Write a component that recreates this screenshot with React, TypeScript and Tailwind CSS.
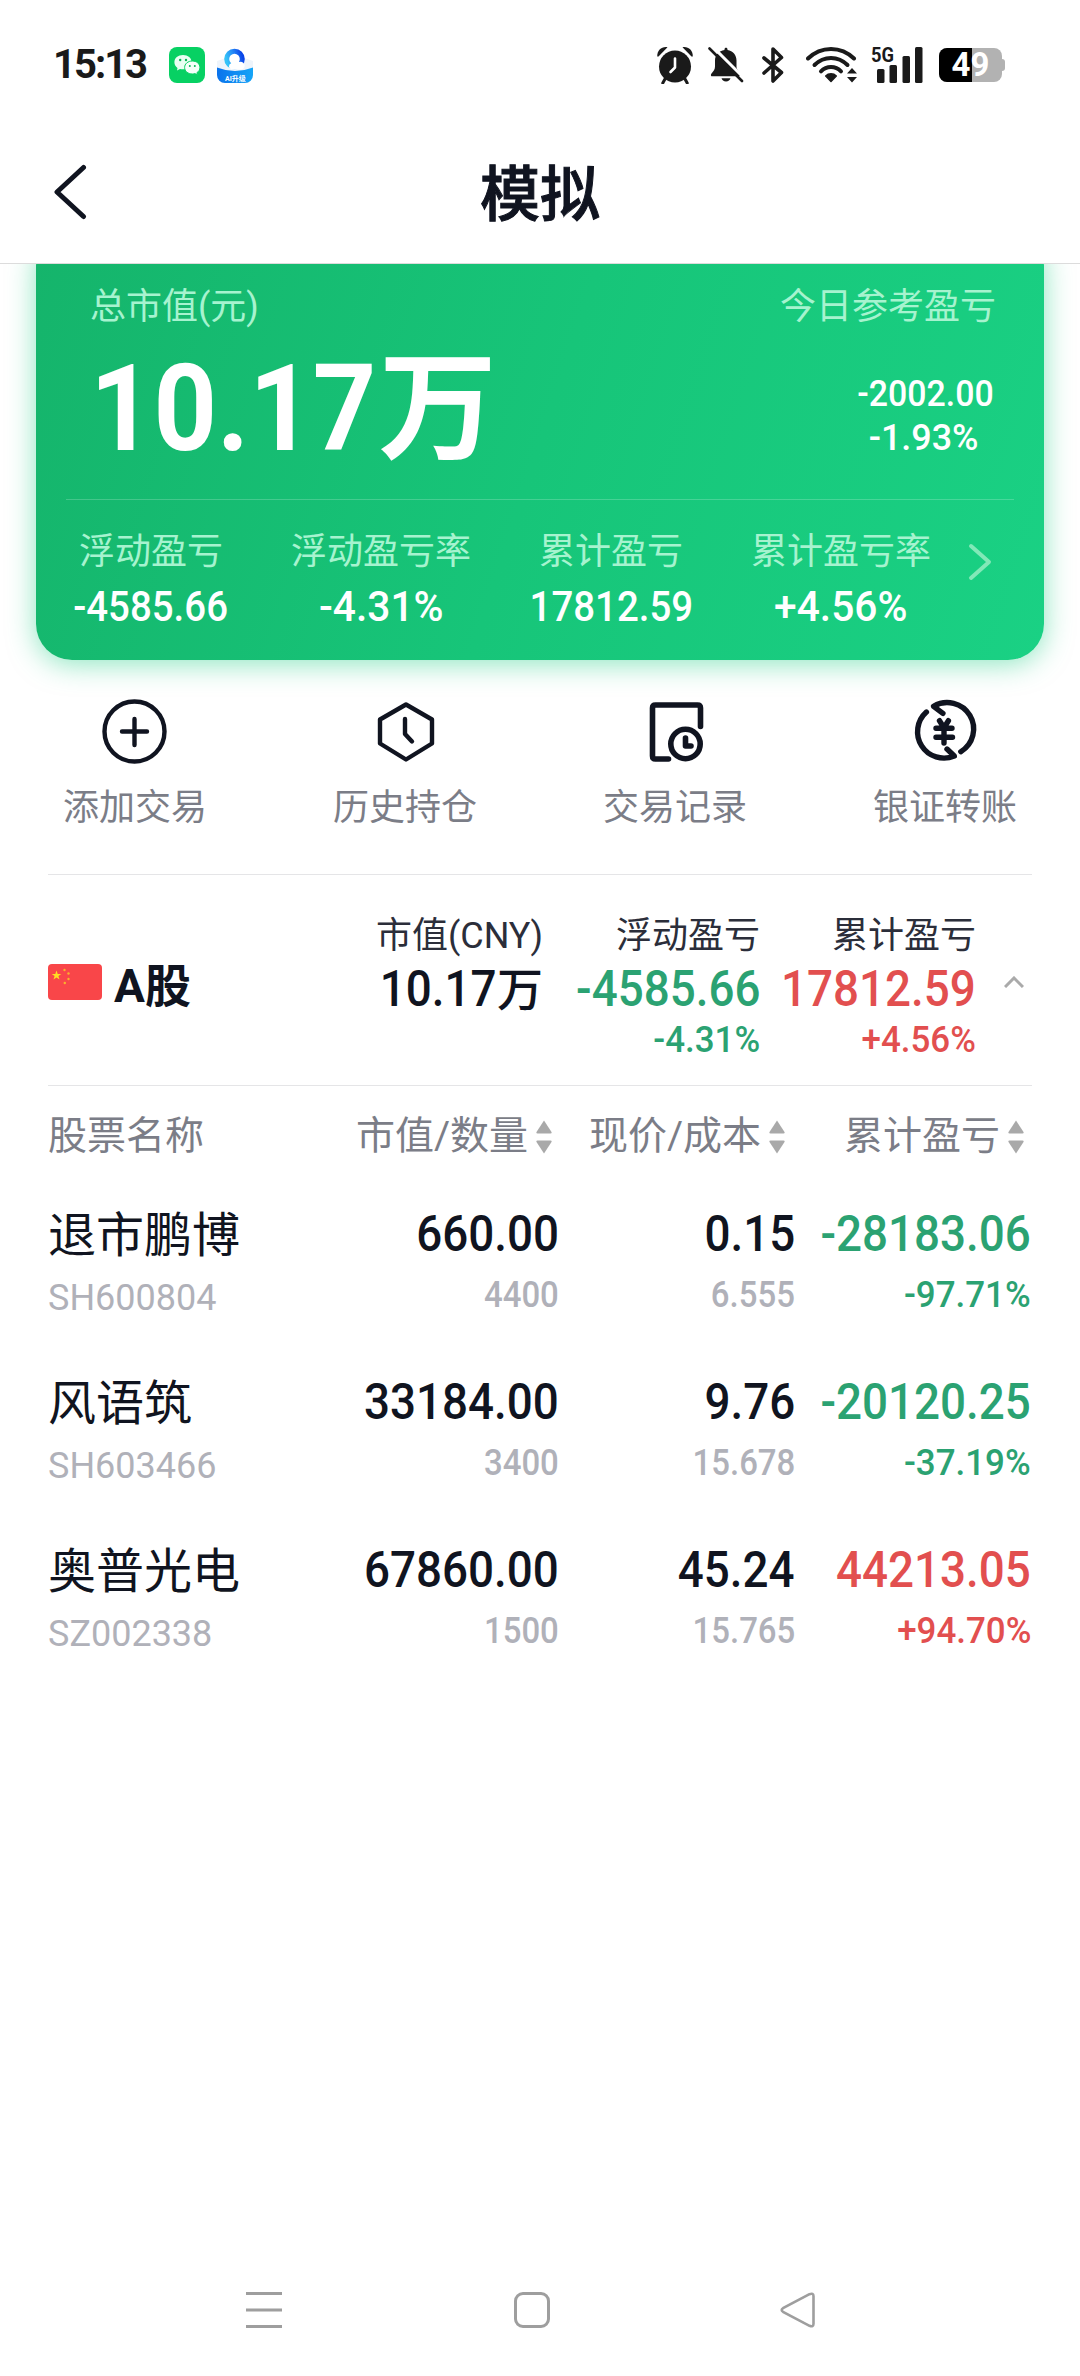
import type { ReactNode } from "react";
import clsx from "clsx";

interface Holding {
  name: string;
  code: string;
  value: string;
  amount: string;
  price: string;
  cost: string;
  profit: string;
  rate: string;
}

const summary = [
  { label: "浮动盈亏", value: "-4585.66" },
  { label: "浮动盈亏率", value: "-4.31%" },
  { label: "累计盈亏", value: "17812.59" },
  { label: "累计盈亏率", value: "+4.56%" },
];

const holdings: Holding[] = [
  {
    name: "退市鹏博",
    code: "SH600804",
    value: "660.00",
    amount: "4400",
    price: "0.15",
    cost: "6.555",
    profit: "-28183.06",
    rate: "-97.71%",
  },
  {
    name: "风语筑",
    code: "SH603466",
    value: "33184.00",
    amount: "3400",
    price: "9.76",
    cost: "15.678",
    profit: "-20120.25",
    rate: "-37.19%",
  },
  {
    name: "奥普光电",
    code: "SZ002338",
    value: "67860.00",
    amount: "1500",
    price: "45.24",
    cost: "15.765",
    profit: "44213.05",
    rate: "+94.70%",
  },
];

const profitColor = (value: string) =>
  value.startsWith("-") ? "text-[#2ba272]" : "text-[#e24f4f]";

// figures are set a bit narrower than the body font
const Num = ({ children, center }: { children: string; center?: boolean }) => (
  <span
    className={clsx(
      "inline-block",
      center ? "origin-center" : "origin-right",
      children.endsWith("%") ? "scale-x-[0.97]" : "scale-x-[0.915]"
    )}
  >
    {children}
  </span>
);

const WechatIcon = () => (
  <svg width="36" height="36" viewBox="0 0 36 36">
    <rect width="36" height="36" rx="8" fill="#07d163" />
    <path
      d="M14 8c-5 0-8.600 3.100-8.600 7.200 0 2.400 1.200 4.300 3.100 5.700l-.5 2.500 3-1.500c1 .3 2 .4 3 .4 5 0 8.600-3.100 8.600-7.100C22.600 11.100 19 8 14 8z"
      fill="#e9fff3"
    />
    <path
      d="M23.300 14c-4.300 0-7.700 2.800-7.700 6.500s3.400 6.500 7.700 6.500c.9 0 1.800-.1 2.600-.4l2.500 1.300-.5-2.200c1.900-1.200 3-3 3-5.200 0-3.700-3.300-6.500-7.600-6.500z"
      fill="#f4fff9"
      stroke="#07d163"
      strokeWidth="1"
    />
    <circle cx="11.200" cy="13" r="1.200" fill="#07b656" />
    <circle cx="17" cy="13" r="1.200" fill="#07b656" />
    <circle cx="20.800" cy="19" r="1" fill="#07b656" />
    <circle cx="25.800" cy="19" r="1" fill="#07b656" />
  </svg>
);

const BrowserIcon = () => (
  <svg width="36" height="36" viewBox="0 0 36 36">
    <defs>
      <linearGradient id="ring" x1="0" y1="0.600" x2="1" y2="0.300">
        <stop offset="0" stopColor="#35c3f8" />
        <stop offset="0.600" stopColor="#1f7bf5" />
        <stop offset="1" stopColor="#0a45e8" />
      </linearGradient>
      <linearGradient id="ribbon" x1="0" y1="0" x2="1" y2="0">
        <stop offset="0" stopColor="#0a72ec" />
        <stop offset="1" stopColor="#16a5f7" />
      </linearGradient>
    </defs>
    <path d="M0 14l9-3h18l9 3v14a8 8 0 0 1-8 8H8a8 8 0 0 1-8-8z" fill="#eef4fb" />
    <circle cx="17.500" cy="12" r="7.800" fill="#fff" stroke="url(#ring)" strokeWidth="5" />
    <path
      d="M14.500 22.500a3.300 3.300 0 0 1-.4-6.300 4.400 4.400 0 0 1 8.200-1.200 4 4 0 0 1 5.400 3.700c0 2.200-1.700 3.800-3.800 3.800z"
      fill="#fff"
    />
    <path d="M0 20.500q18 7 36 0V28a8 8 0 0 1-8 8H8a8 8 0 0 1-8-8z" fill="url(#ribbon)" />
    <text
      x="18.500"
      y="33.500"
      textAnchor="middle"
      fontSize="7"
      fontWeight="700"
      fill="#fff"
      className="font-['Roboto','Noto_Sans_CJK_SC',sans-serif]"
    >
      AI升级
    </text>
  </svg>
);

const AlarmIcon = () => (
  <svg width="38" height="38" viewBox="0 0 38 38" fill="#1a1a1a">
    <circle cx="19" cy="20.500" r="16" />
    <path d="M1.200 10.500C1 4 6 .2 11.500 1.200L2.500 10.500z" />
    <path d="M36.800 10.500C37 4 32 .2 26.500 1.200L35.500 10.500z" />
    <path d="M9 33l-2.200 4M29 33l2.200 4" stroke="#1a1a1a" strokeWidth="3" strokeLinecap="round" />
    <path
      d="M19 12.500v9l-4.500 4.500"
      fill="none"
      stroke="#fff"
      strokeWidth="2.600"
      strokeLinecap="round"
      strokeLinejoin="round"
    />
  </svg>
);

const MutedBellIcon = () => (
  <svg width="36" height="36" viewBox="0 0 36 36" fill="#1a1a1a">
    <path d="M18 .8c.9 0 1.500.6 1.500 1.500v.6c5.500.8 9 5 9 10.500v6.500c0 2.500 3.500 5.500 3.500 8 0 1-.7 1.400-1.500 1.400h-26c-1.800 0-2-1.600-1-2.900C5.500 24 7 22.500 7 19.500v-6c0-5.500 3.800-9.800 9.500-10.600v-.6C16.500 1.400 17.100.8 18 .8z" />
    <path d="M13.500 31.300h9c-.5 2-2.200 3.200-4.500 3.200s-4-1.200-4.500-3.200z" />
    <path d="M3.500 -1.500L36.500 31.500" stroke="#fff" strokeWidth="3" />
    <path d="M1.500 1.500L34 34" stroke="#1a1a1a" strokeWidth="2.600" strokeLinecap="round" />
  </svg>
);

const BluetoothIcon = () => (
  <svg width="22" height="38" viewBox="0 0 22 38">
    <path
      d="M2 12l17.500 14.500L11 35V3l8.500 8.500L2 27"
      fill="none"
      stroke="#1a1a1a"
      strokeWidth="3.600"
      strokeLinecap="round"
      strokeLinejoin="round"
    />
  </svg>
);

const WifiIcon = () => (
  <svg width="52" height="38" viewBox="0 0 52 38" fill="none" stroke="#1a1a1a" strokeWidth="4">
    <path d="M2 12.500C15 -.3 35 -.3 48 12.500" strokeLinecap="round" />
    <path d="M8.500 19C18 9.600 32 9.600 41.500 19" strokeLinecap="round" />
    <path d="M15 25.300C20.500 19.500 29.500 19.500 35 25.300" strokeLinecap="round" />
    <path
      d="M25 35.500l-5.300-5.500c2.800-2.900 7.800-2.900 10.600 0z"
      fill="#1a1a1a"
      strokeWidth="1.500"
      strokeLinejoin="round"
    />
    <path d="M46 22l5 5.500H41zM46 36.500l5-5.500H41z" fill="#1a1a1a" stroke="none" />
  </svg>
);

const SignalIcon = () => (
  <svg className="overflow-visible" width="52" height="38" viewBox="0 0 52 38" fill="#1a1a1a">
    <text
      x="0"
      y="15.500"
      fontSize="20"
      fontWeight="700"
      textLength="23"
      lengthAdjust="spacingAndGlyphs"
      className="font-['Roboto',sans-serif]"
    >
      5G
    </text>
    <rect x="6" y="23" width="7.500" height="14" rx="1.500" />
    <rect x="18.500" y="19" width="7.500" height="18" rx="1.500" />
    <rect x="31.500" y="10" width="7.500" height="27" rx="1.500" />
    <rect x="44" y="1" width="7.500" height="36" rx="1.500" />
  </svg>
);

const Battery = () => (
  <div className="flex items-center">
    <div className="relative flex h-[34px] w-[63px] items-center justify-center rounded-[8px] bg-[#b2b2b2]">
      <div className="absolute left-0 top-0 h-full w-[33px] rounded-l-[8px] bg-black" />
      <span className="relative text-[33px] font-bold leading-[40px] text-white">
        49
      </span>
    </div>
    <div className="h-[12px] w-[3px] rounded-r-[3px] bg-[#b2b2b2]" />
  </div>
);

const StatusBar = () => (
  <div className="flex h-[121px] items-center pl-[53px] pr-[75px] pt-2">
    <span className="w-[94px] text-[40px] font-bold leading-[44px] tracking-[-2px] text-[#1a1a1a]">
      15:13
    </span>
    <div className="ml-[22px] flex gap-3">
      <WechatIcon />
      <BrowserIcon />
    </div>
    <div className="ml-auto flex items-center">
      <AlarmIcon />
      <div className="ml-[14px]">
        <MutedBellIcon />
      </div>
      <div className="ml-[18px]">
        <BluetoothIcon />
      </div>
      <div className="ml-[22px]">
        <WifiIcon />
      </div>
      <div className="ml-[13px]">
        <SignalIcon />
      </div>
      <div className="ml-[16px]">
        <Battery />
      </div>
    </div>
  </div>
);

const Header = () => (
  <header className="grid h-[143px] grid-cols-3 items-center border-b border-[#dcdcdc] bg-white px-[53px]">
    <button aria-label="返回">
      <svg width="34" height="56" viewBox="0 0 34 56">
        <path
          d="M30.500 3.500L4 28l26.500 24.500"
          fill="none"
          stroke="#101420"
          strokeWidth="5"
          strokeLinecap="round"
          strokeLinejoin="round"
        />
      </svg>
    </button>
    <h1 className="pt-2 text-center text-[60px] font-medium leading-[80px] [-webkit-text-stroke:1px_#101420]">
      模拟
    </h1>
  </header>
);

const SummaryCard = () => (
  <section className="relative mx-9 -mt-[33px] h-[429px] rounded-[36px] bg-[linear-gradient(108deg,#15b46b_0%,#17c579_50%,#1ad184_100%)] pt-[51px] text-white shadow-[0_4px_28px_rgba(26,205,130,0.5)]">
    <div className="flex justify-between px-[54px]">
      <div>
        <p className="text-[36px] leading-[50px] text-[#a6f3cf]">总市值(元)</p>
        <p className="mt-[27px] whitespace-nowrap text-[121px] font-bold leading-[100px]">
          <span className="inline-block origin-left scale-x-[0.915]">10.17</span>
          <span className="-ml-[24px] text-[118px]">万</span>
        </p>
      </div>
      <div className="mr-[-6px]">
        <p className="text-[36px] leading-[50px] text-[#a6f3cf]">
          今日参考盈亏
        </p>
        <div className="ml-auto mt-[40px] w-[145px] whitespace-nowrap text-center text-[37px] font-medium leading-[44px]">
          <p>
            <Num center>-2002.00</Num>
          </p>
          <p>
            <Num center>-1.93%</Num>
          </p>
        </div>
      </div>
    </div>
    <hr className="mx-[30px] mt-[39px] border-white/20" />
    <div className="mt-[27px] flex items-center">
      {summary.map((item) => (
        <div key={item.label} className="w-[230px] text-center">
          <p className="text-[36px] leading-[50px] text-[#a6f3cf]">
            {item.label}
          </p>
          <p className="mt-[5px] text-[42px] font-medium leading-[50px]">
            <Num center>{item.value}</Num>
          </p>
        </div>
      ))}
      <svg className="ml-[12px] -mt-[35px]" width="24" height="38" viewBox="0 0 24 38">
        <path
          d="M3 3l18 16L3 35"
          fill="none"
          stroke="#82e8b8"
          strokeWidth="4"
          strokeLinecap="round"
          strokeLinejoin="round"
        />
      </svg>
    </div>
  </section>
);

const Action = ({ label, children }: { label: string; children: ReactNode }) => (
  <button className="flex flex-col items-center">
    <svg
      width="72"
      height="72"
      viewBox="0 0 72 72"
      fill="none"
      stroke="#101420"
      strokeWidth="4.400"
      strokeLinecap="round"
      strokeLinejoin="round"
    >
      {children}
    </svg>
    <span className="mt-[16px] text-[36px] leading-[50px] text-[#7b7d87]">
      {label}
    </span>
  </button>
);

const Actions = () => (
  <section className="mt-[35px] grid grid-cols-4">
    <Action label="添加交易">
      <circle cx="35.500" cy="36.500" r="30" />
      <path d="M35.500 24v26M23 36.500h25" />
    </Action>
    <Action label="历史持仓">
      <path d="M37 9.500l26 15v24L37 64.500l-26-16v-24z" />
      <path d="M36 24v15l7 7.500" />
    </Action>
    <Action label="交易记录">
      <path
        d="M31 64.500H18q-3 0-3-3v-48q0-3 3-3h42q3 0 3 3V32"
        strokeWidth="5.600"
        transform="translate(-1.500 -.5)"
      />
      <circle cx="46.500" cy="49" r="14.700" strokeWidth="5.600" />
      <path d="M46.500 43v8h5.500" strokeWidth="5.600" />
    </Action>
    <Action label="银证转账">
      <g strokeWidth="5.400">
        <path d="M17.400 17A26.400 26.400 0 0 0 45.300 61L38 54" />
        <path d="M51.800 56.700A26.400 26.400 0 0 0 24.600 11.300L33.900 18.300" />
        <path d="M30.500 25.700l4.500 7 4.400-7M27 33.300h16M27 42.300h16.500M35 33v15" />
      </g>
    </Action>
  </section>
);

const ChinaFlag = () => (
  <svg width="54" height="36" viewBox="0 0 54 36">
    <rect width="54" height="36" rx="4" fill="#f94649" />
    <path
      d="M8.500 6.500l1.200 3.400h3.600l-2.900 2.200 1.100 3.500-3-2.100-3 2.100 1.100-3.500-2.900-2.200h3.600z"
      fill="#ffde22"
    />
    <g fill="#f9b32c">
      <circle cx="16.500" cy="6" r="1.200" />
      <circle cx="20.500" cy="9.500" r="1.200" />
      <circle cx="20.500" cy="15" r="1.200" />
      <circle cx="16.800" cy="19" r="1.200" />
    </g>
  </svg>
);

const MarketRow = () => (
  <section className="mx-12 flex h-[212px] items-center border-y border-[#e5e5e7] pt-[3px]">
    <ChinaFlag />
    <h2 className="ml-[12px] mt-[8px] text-[46px] font-bold leading-[60px]">
      A股
    </h2>
    <div className="ml-auto flex self-start whitespace-nowrap pt-[33px] text-right text-[36px] leading-[46px]">
      <div>
        <p className="leading-[50px] text-[#2b2e3a]">市值(CNY)</p>
        <p className="text-[50px] font-medium leading-[56px]">
          <Num>10.17</Num>
          <span className="text-[46px]">万</span>
        </p>
      </div>
      <div className="w-[217px]">
        <p className="leading-[50px] text-[#2b2e3a]">浮动盈亏</p>
        <p className="text-[50px] font-medium leading-[56px] text-[#2ba272]">
          <Num>-4585.66</Num>
        </p>
        <p className="font-medium text-[#2ba272]">
          <Num>-4.31%</Num>
        </p>
      </div>
      <div className="w-[216px]">
        <p className="leading-[50px] text-[#2b2e3a]">累计盈亏</p>
        <p className="text-[50px] font-medium leading-[56px] text-[#e24f4f]">
          <Num>17812.59</Num>
        </p>
        <p className="font-medium text-[#e24f4f]">
          <Num>+4.56%</Num>
        </p>
      </div>
    </div>
    <svg className="ml-[28px] mr-[8px]" width="20" height="12" viewBox="0 0 20 12">
      <path d="M1 11l9-9 9 9" fill="none" stroke="#aaa" strokeWidth="3" />
    </svg>
  </section>
);

const SortIcon = () => (
  <svg width="16" height="34" viewBox="0 0 16 34" fill="#a9a9a9">
    <path d="M8 0.500l7.500 11.500q.6 1.500-1 1.500h-13q-1.600 0-1-1.500z" />
    <path d="M8 33.500l7.500-11.500q.6-1.500-1-1.500h-13q-1.600 0-1 1.500z" />
  </svg>
);

const HoldingsTable = () => (
  <section className="mx-12">
    <div className="mb-[17px] flex h-[101px] items-center text-[39px] text-[#7b7d87]">
      <span className="w-[200px]">股票名称</span>
      <div className="flex w-[304px] items-center justify-end gap-2">
        市值/数量
        <SortIcon />
      </div>
      <div className="flex w-[233px] items-center justify-end gap-2">
        现价/成本
        <SortIcon />
      </div>
      <div className="flex w-[239px] items-center justify-end gap-2">
        累计盈亏
        <SortIcon />
      </div>
    </div>
    {holdings.map((item) => (
      <div
        key={item.code}
        className="flex h-[168px] whitespace-nowrap text-right text-[50px] font-medium leading-[60px]"
      >
        <div className="w-[200px] text-left text-[48px] font-normal">
          <p className="pt-[2px]">{item.name}</p>
          <p className="mt-[10px] text-[36px] leading-[44px] text-[#b0b1b9]">
            {item.code}
          </p>
        </div>
        <div className="w-[311px]">
          <p>
            <Num>{item.value}</Num>
          </p>
          <p className="mt-[9px] text-[36px] leading-[44px] text-[#b0b1b9]">
            <Num>{item.amount}</Num>
          </p>
        </div>
        <div className="w-[236px]">
          <p>
            <Num>{item.price}</Num>
          </p>
          <p className="mt-[9px] text-[36px] leading-[44px] text-[#b0b1b9]">
            <Num>{item.cost}</Num>
          </p>
        </div>
        <div className={clsx("flex w-[236px] flex-col items-end", profitColor(item.profit))}>
          <p>
            <Num>{item.profit}</Num>
          </p>
          <p className="mt-[9px] text-[36px] leading-[44px]">
            <Num>{item.rate}</Num>
          </p>
        </div>
      </div>
    ))}
  </section>
);

const NavBar = () => (
  <nav className="flex h-[132px] items-center pl-[245px]">
    <svg width="38" height="38" viewBox="0 0 38 38">
      <path d="M1 2.500h36M1 19h36M1 35.500h36" stroke="#9e9e9e" strokeWidth="3" />
    </svg>
    <div className="ml-[231px] h-[36px] w-[36px] rounded-[9px] border-[3px] border-[#9e9e9e]" />
    <svg className="ml-[229px]" width="38" height="38" viewBox="0 0 38 38">
      <path
        d="M30.500 3.200L4 17.200q-2.600 1.800 0 3.600l26.500 14q4 1.500 4-2V5.200q0-3.500-4-2z"
        fill="none"
        stroke="#9e9e9e"
        strokeWidth="2.600"
      />
    </svg>
  </nav>
);

export default function App() {
  return (
    <div className="flex h-[2376px] w-[1080px] flex-col overflow-hidden bg-white font-['Roboto','Noto_Sans_CJK_SC',sans-serif] text-[#101420]">
      <StatusBar />
      <Header />
      <main className="flex-1 overflow-hidden">
        <SummaryCard />
        <Actions />
        <div className="mt-[41px]">
          <MarketRow />
        </div>
        <HoldingsTable />
      </main>
      <NavBar />
    </div>
  );
}
